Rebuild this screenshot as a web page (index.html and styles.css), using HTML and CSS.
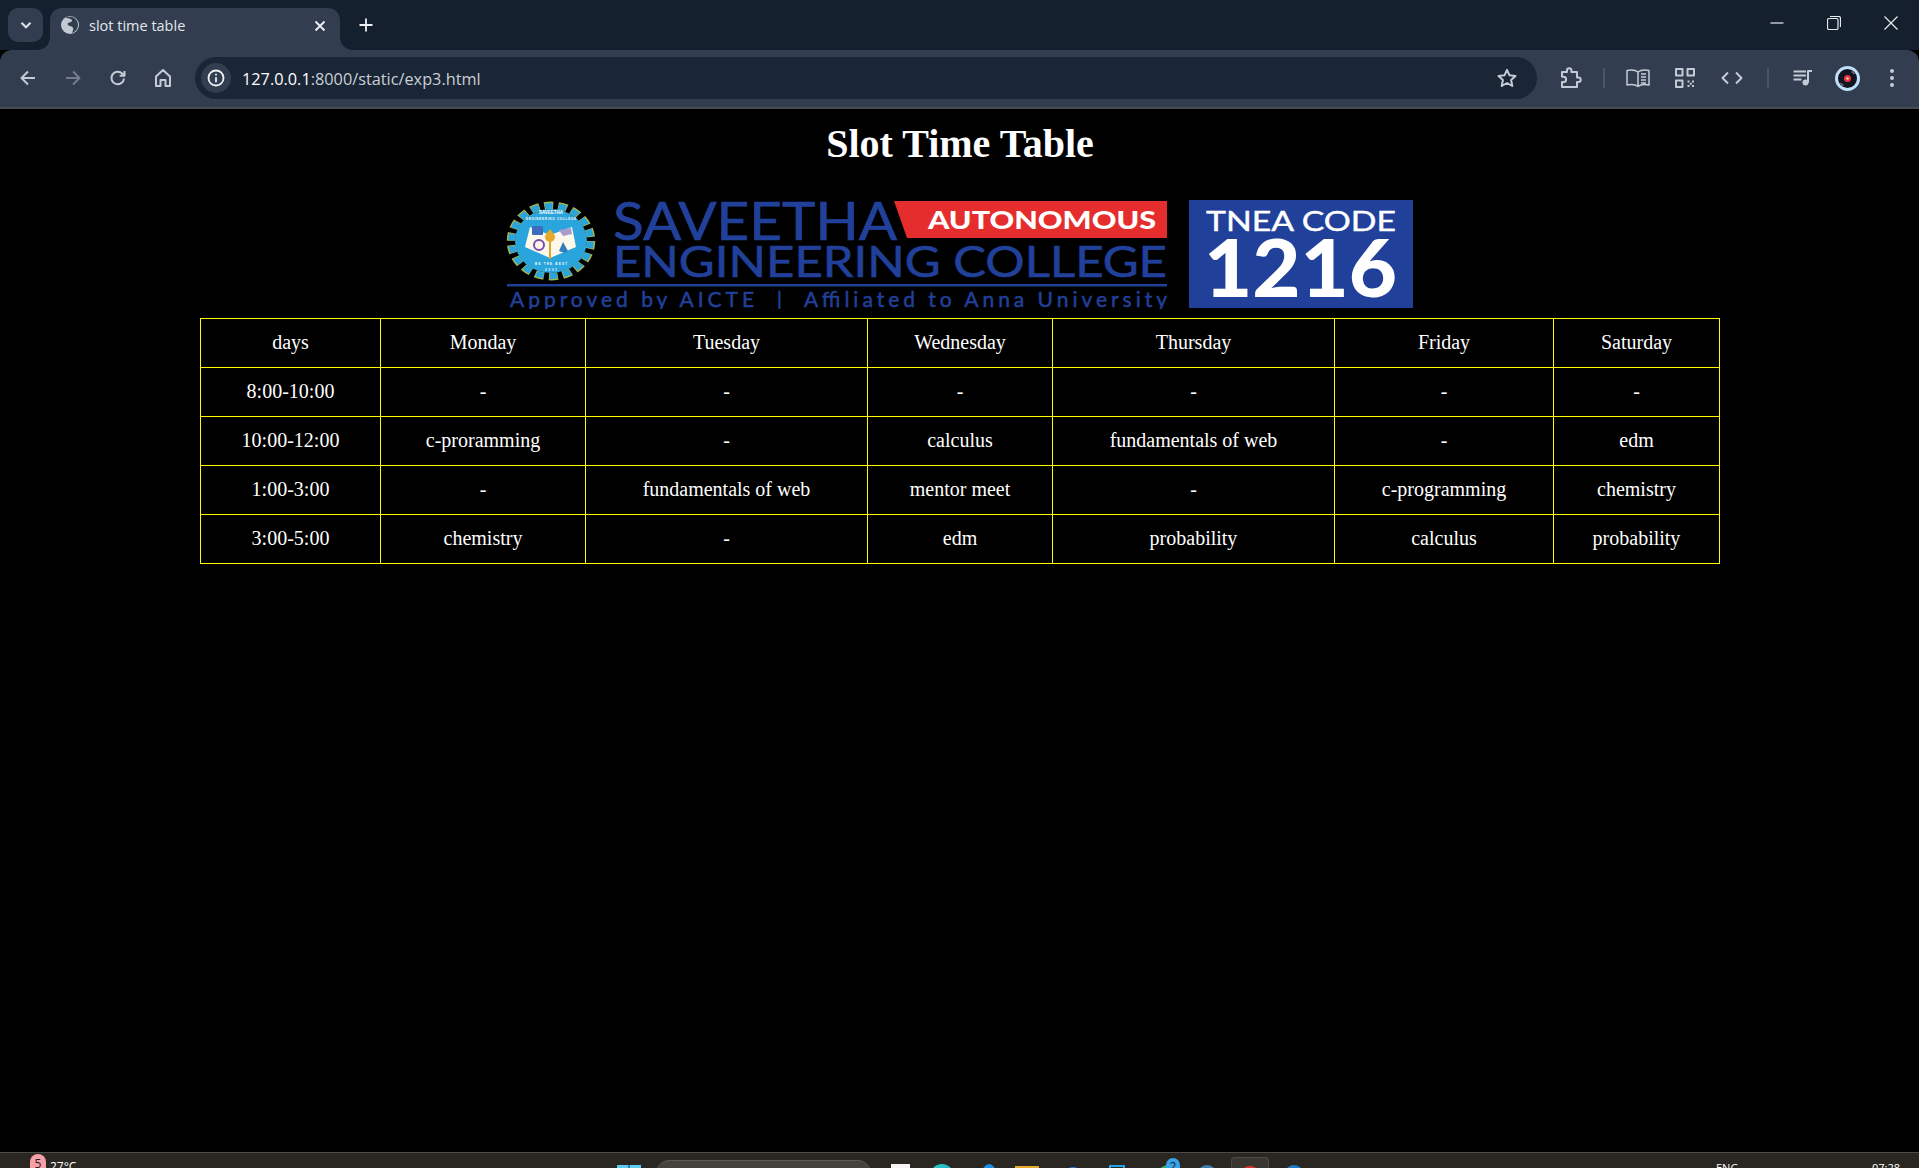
FILE: index.html
```html
<!DOCTYPE html>
<html lang="en">
<head>
<meta charset="utf-8">
<title>slot time table</title>
<link rel="stylesheet" href="styles.css">
</head>
<body>
<div class="app">
  <header class="chrome">
    <div class="tabstrip">
      <button class="tabsearch"><svg width="16" height="16" viewBox="0 0 16 16"><path d="M3.5 5.8 8 10.3l4.5-4.5" class="st2"/></svg></button>
      <div class="tab">
        <svg class="favicon" width="20" height="20" viewBox="0 0 20 20"><circle cx="10" cy="10" r="9" fill="#c3c9d1"/><path d="M6 1.800c1 2.200 3.500 1.400 5.500 2.700 1.500 1-.2 2.700-2 3-1.800.3-2.700 1.500-1.200 2.800 1.300 1.200 3.800.8 4.700 2.400.7 1.300-.3 3-1 5.300 3.500-1 6-4.200 6-7.900 0-4.500-3-7.300-6.500-8.300z" fill="#323e4f"/></svg>
        <span class="tabtitle">slot time table</span>
        <svg class="tabclose" width="12" height="12" viewBox="0 0 12 12"><path d="M1.500 1.500l9 9m0-9-9 9" class="st2 w"/></svg>
      </div>
      <div class="newtab"><svg width="16" height="16" viewBox="0 0 16 16"><path d="M8 1.500v13M1.500 8h13" class="st2 w"/></svg></div>
      <div class="winctrls">
        <div class="winbtn"><svg width="14" height="14" viewBox="0 0 14 14"><path d="M.5 7h13" class="st1"/></svg></div>
        <div class="winbtn"><svg width="14" height="14" viewBox="0 0 14 14"><rect x=".5" y="2.500" width="10.500" height="11" rx="1.500" class="st1"/><path d="M3 .5h8.500a2 2 0 0 1 2 2V11" class="st1"/></svg></div>
        <div class="winbtn"><svg width="14" height="14" viewBox="0 0 14 14"><path d="M.5.5l13 13m0-13-13 13" class="st1"/></svg></div>
      </div>
    </div>
    <div class="toolbar">
      <div class="navs">
        <div class="nav"><svg width="18" height="18" viewBox="0 0 18 18"><path d="M16 9H3M9 2.500 2.500 9 9 15.500" class="ic"/></svg></div>
        <div class="nav dim"><svg width="18" height="18" viewBox="0 0 18 18"><path d="M2 9h13M9 2.500 15.500 9 9 15.500" class="ic"/></svg></div>
        <div class="nav"><svg width="18" height="18" viewBox="0 0 18 18"><path d="M15 9.500A6.300 6.300 0 1 1 13.200 4.500L15.500 6.800M15.500 2v4.800h-4.800" class="ic"/></svg></div>
        <div class="nav"><svg width="18" height="20" viewBox="0 0 18 20"><path d="M2 8.500 9 2l7 6.500V18h-4.500v-6h-5v6H2z" class="ic"/></svg></div>
      </div>
      <div class="omnibox">
        <div class="siteinfo"><svg width="18" height="18" viewBox="0 0 18 18"><circle cx="9" cy="9" r="7.500" class="st2 w"/><path d="M9 8.200v5M9 4.800v1.700" class="st2 w"/></svg></div>
        <span class="url"><span class="host">127.0.0.1</span>:8000/static/exp3.html</span>
        <svg class="star" width="20" height="20" viewBox="0 0 20 20"><path d="M10 1.800l2.500 5.500 6 .7-4.400 4 1.200 6L10 15l-5.300 3 1.200-6-4.400-4 6-.7z" class="ic"/></svg>
      </div>
      <div class="tool first"><svg width="22" height="22" viewBox="0 0 22 22"><path d="M2 5h5V3.500a2.200 2.200 0 0 1 4.400 0V5H17v5.500h1.500a2.200 2.200 0 0 1 0 4.400H17V20H2v-5h1.500a2.600 2.600 0 0 0 0-5.200H2z" class="ic"/></svg></div>
      <div class="sep"></div>
      <div class="tool"><svg width="24" height="20" viewBox="0 0 24 20"><path d="M12 4C9.500 2 5 1.800 1 2.500V17c4-.7 8.500-.5 11 1.500 2.500-2 7-2.200 11-1.500V2.500C19 1.800 14.500 2 12 4zM12 4v14M15 6h5M15 9h5M15 12h5M15 15h5" class="ic thin"/></svg></div>
      <div class="tool"><svg width="20" height="20" viewBox="0 0 20 20"><path d="M1 1h6.500v6.500H1zM12.500 1H19v6.500h-6.500zM1 12.500h6.500V19H1z" class="ic"/><path d="M12.500 12.500h2v2h-2zM17 12.500h2v2h-2zM14.800 14.800h2v2h-2zM12.500 17h2v2h-2zM17 17h2v2h-2z" class="fillic"/></svg></div>
      <div class="tool"><svg width="22" height="14" viewBox="0 0 22 14"><path d="M7 1.500 1.500 7 7 12.500M15 1.500 20.500 7 15 12.500" class="ic"/></svg></div>
      <div class="sep wide"></div>
      <div class="tool small"><svg width="20" height="16" viewBox="0 0 20 16"><path d="M.5 1.500h12.500M.5 5.500h12.500M.5 9.500h8" class="ic"/><circle cx="12.500" cy="12.500" r="3" class="fillic"/><path d="M15 12.500V1h4" class="ic"/></svg></div>
      <div class="tool small"><div class="avatar"><svg width="25" height="25" viewBox="0 0 25 25"><circle cx="12.500" cy="12.500" r="11" fill="#121420" stroke="#bfe0fb" stroke-width="3"/><circle cx="12.500" cy="12.500" r="3.500" fill="#ee2f55"/><circle cx="12.500" cy="12.500" r="1.300" fill="#f6d34a"/><path d="M5.500 17a8 8 0 0 0 3 2.500M19.500 8a8 8 0 0 0-3-2.500" stroke="#656a78" stroke-width="1.500" fill="none"/></svg></div></div>
      <div class="tool small"><svg width="6" height="20" viewBox="0 0 6 20"><circle cx="3" cy="3" r="2" class="fillic"/><circle cx="3" cy="10" r="2" class="fillic"/><circle cx="3" cy="17" r="2" class="fillic"/></svg></div>
    </div>
  </header>

  <main class="page">
    <h1 class="title">Slot Time Table</h1>
    <div class="logorow">
      <svg class="logo" width="910" height="110" viewBox="0 0 910 110" role="img" aria-label="Saveetha Engineering College logo">
        <g transform="translate(46 42) scale(1 .89) translate(-46 -41)">
          <circle cx="46" cy="41" r="40" fill="none" stroke="#a8b54a" stroke-width="8.500" stroke-dasharray="9 4.960"/>
          <circle cx="46" cy="41" r="39.500" fill="none" stroke="#2aa4dc" stroke-width="6.500" stroke-dasharray="7.500 6.290" stroke-dashoffset="-.5"/>
          <circle cx="46" cy="41" r="36" fill="#2aa4dc"/>
        </g>
        <path d="M25 28 45 36v23L20 48zM45 36 67 28l4 20-26 11z" fill="#fdf8ea"/>
        <rect x="27" y="27" width="11" height="9" rx="1" fill="#3b6cc0"/>
        <circle cx="34" cy="46" r="5" fill="none" stroke="#7a4bb0" stroke-width="2"/>
        <path d="M54 31l12-2 1 6-9 2z" fill="#a99ad0"/>
        <path d="M54 52l4-9 5 9-3 2z" fill="#2c7ebc"/>
        <path d="M45 60V42" stroke="#e0a52c" stroke-width="2"/>
        <path d="M45 30c3 4 5 6 5 8a5 5 0 0 1-10 0c0-2 2-4 5-8z" fill="#e8a82a"/>
        <text x="46" y="15" class="seal seal-a" text-anchor="middle" textLength="24">SAVEETHA</text>
        <text x="46" y="21" class="seal seal-b" text-anchor="middle" textLength="50">ENGINEERING COLLEGE</text>
        <text x="46" y="66" class="seal seal-b" text-anchor="middle" textLength="32">BE THE BEST</text>
        <text x="46" y="72" class="seal seal-b" text-anchor="middle" textLength="12">2001</text>
        <text x="108" y="41" class="lg lg-a" textLength="284" lengthAdjust="spacingAndGlyphs">SAVEETHA</text>
        <polygon points="389,2 662,2 662,39 402,39" fill="#e52d2d"/>
        <text x="423" y="29.500" class="lg lg-auto" textLength="228" lengthAdjust="spacingAndGlyphs">AUTONOMOUS</text>
        <text x="108" y="78" class="lg lg-b" textLength="554" lengthAdjust="spacingAndGlyphs">ENGINEERING COLLEGE</text>
        <rect x="2" y="85" width="660" height="2.500" fill="#21409a"/>
        <text x="5" y="108" class="lg lg-c" textLength="657" lengthAdjust="spacing">Approved by AICTE  |  Affiliated to Anna University</text>
        <rect x="684" y="1" width="224" height="108" fill="#21409a"/>
        <text x="701" y="32" class="lg lg-tnea" textLength="190" lengthAdjust="spacingAndGlyphs">TNEA CODE</text>
        <text x="699" y="98" class="lg lg-code" textLength="193" lengthAdjust="spacingAndGlyphs">1216</text>
      </svg>
    </div>
    <table class="slots">
      <colgroup>
        <col class="c1"><col class="c2"><col class="c3"><col class="c4"><col class="c5"><col class="c6"><col class="c7">
      </colgroup>
      <tr><td>days</td><td>Monday</td><td>Tuesday</td><td>Wednesday</td><td>Thursday</td><td>Friday</td><td>Saturday</td></tr>
      <tr><td>8:00-10:00</td><td>-</td><td>-</td><td>-</td><td>-</td><td>-</td><td>-</td></tr>
      <tr><td>10:00-12:00</td><td>c-proramming</td><td>-</td><td>calculus</td><td>fundamentals of web</td><td>-</td><td>edm</td></tr>
      <tr><td>1:00-3:00</td><td>-</td><td>fundamentals of web</td><td>mentor meet</td><td>-</td><td>c-programming</td><td>chemistry</td></tr>
      <tr><td>3:00-5:00</td><td>chemistry</td><td>-</td><td>edm</td><td>probability</td><td>calculus</td><td>probability</td></tr>
    </table>
  </main>

  <footer class="taskbar">
    <div class="weather"><span class="badge">5</span><span class="temp">27°C</span></div>
    <div class="winlogo"><svg width="24" height="24" viewBox="0 0 24 24"><path d="M0 0h11.500v11.500H0zM12.500 0H24v11.500H12.500z" fill="#5ccdf2"/></svg></div>
    <div class="search"></div>
    <div class="tb white"></div>
    <div class="tb teal"></div>
    <div class="tb drop"></div>
    <div class="tb folder"></div>
    <div class="tb blue"></div>
    <div class="tb store"></div>
    <div class="tb notify"><span class="nbadge">2</span></div>
    <div class="tb globe"></div>
    <div class="tb active"><span class="red"></span></div>
    <div class="tb blue2"></div>
    <div class="tray"><span>ENG</span><span class="clock">07:28</span></div>
  </footer>
</div>
</body>
</html>
```

FILE: styles.css
```css
* { box-sizing: border-box; }
html, body { margin: 0; padding: 0; background: #000; }
.app { height: 100vh; display: flex; flex-direction: column; overflow: hidden; }

/* browser chrome */
.chrome { flex: none; font-family: "Open Sans", "Noto Sans", sans-serif; }
.tabstrip { height: 50px; background: #15202e; display: flex; align-items: flex-start; padding: 8px 0 0 8px; }
.tabsearch { width: 35px; height: 34px; border: 0; padding: 0; border-radius: 10px; background: #323e4f; display: flex; align-items: center; justify-content: center; }
.tab { position: relative; width: 290px; height: 42px; margin-left: 7px; background: #323e4f; border-radius: 12px 12px 0 0; display: flex; align-items: center; padding: 0 14px 0 10px; }
.tab::before, .tab::after { content: ""; position: absolute; bottom: 0; width: 12px; height: 12px; }
.tab::before { left: -12px; background: radial-gradient(circle at 0 0, transparent 11.5px, #323e4f 12px); }
.tab::after { right: -12px; background: radial-gradient(circle at 100% 0, transparent 11.5px, #323e4f 12px); }
.favicon { flex: none; margin-top: -8px; }
.tabtitle { margin-left: 9px; flex: 1; font-size: 14.500px; color: #e2e6eb; margin-top: -7px; }
.tabclose { flex: none; margin-top: -7px; }
.newtab { width: 16px; height: 16px; margin: 9px 0 0 18px; display: flex; }
.winctrls { margin-left: auto; display: flex; margin-top: 8px; padding-right: 21px; }
.winbtn { width: 57px; height: 16px; display: flex; justify-content: flex-end; }
.toolbar { height: 59px; background: #323e4f; border-radius: 12px 12px 0 0; border-bottom: 2px solid #474c52; display: flex; align-items: center; padding-bottom: 1px; }
.navs { display: flex; padding-left: 5px; }
.nav { width: 45px; height: 30px; display: flex; align-items: center; justify-content: center; }
.dim { opacity: .45; }
.omnibox { width: 1342px; height: 42px; margin-left: 10px; border-radius: 21px; background: #1a2535; display: flex; align-items: center; padding: 0 20px 0 6px; }
.siteinfo { width: 30px; height: 30px; border-radius: 50%; background: #323e4f; display: flex; align-items: center; justify-content: center; flex: none; }
.url { margin: 2px 0 0 11px; flex: 1; font-size: 16.300px; color: #c9cfd7; }
.host { color: #fff; }
.star { flex: none; }
.tool { width: 46px; height: 30px; margin-right: 1px; display: flex; align-items: center; justify-content: center; flex: none; }
.tool.first { margin: 0 0 0 11px; }
.tool.small { width: 44px; margin-right: 0.500px; }
.sep { width: 2px; height: 20px; margin: 0 10px 0 9px; background: #4b5665; flex: none; }
.sep.wide { margin: 0 12px 0 11px; }
.avatar { width: 25px; height: 25px; }
.st1 { fill: none; stroke: #e8eaee; stroke-width: 1.200; }
.st2 { fill: none; stroke: #d9dee5; stroke-width: 2.200; }
.st2.w { stroke: #eef0f3; stroke-width: 1.800; }
.ic { fill: none; stroke: #c3cbd6; stroke-width: 2; stroke-linejoin: round; }
.ic.thin { stroke-width: 1.500; }
.fillic { fill: #c3cbd6; }

/* page */
.page { flex: 1; min-height: 0; overflow: hidden; padding-left: 1px; background: #000; color: #fff; font-family: "Liberation Serif", "Times New Roman", serif; }
.title { margin: 12px 0 0; font-size: 40px; line-height: 46px; font-weight: 700; text-align: center; }
.logorow { display: flex; justify-content: center; margin-top: 32px; }
.logo { display: block; }
.lg { font-family: Lato, "Open Sans", sans-serif; fill: #21409a; }
.lg-a { font-size: 53px; font-weight: 400; stroke: #21409a; stroke-width: .7px; }
.lg-b { font-size: 43px; font-weight: 400; stroke: #21409a; stroke-width: .6px; }
.lg-c { font-size: 21px; font-weight: 400; white-space: pre; stroke: #21409a; stroke-width: .5px; }
.lg-auto { font-size: 25px; font-weight: 900; fill: #fff; }
.lg-tnea { font-size: 27px; font-weight: 400; fill: #fff; stroke: #fff; stroke-width: .4px; }
.lg-code { font-size: 80px; font-weight: 900; fill: #fff; }
.seal { font-family: "Liberation Sans", sans-serif; fill: #fff; font-weight: 700; }
.seal-a { font-size: 4.500px; }
.seal-b { font-size: 3px; }
.slots { width: 1519px; margin: 9px 0 0 199px; border-collapse: collapse; table-layout: fixed; font-size: 20px; }
.slots td { height: 49px; padding: 0 0 2px; text-align: center; border: 1px solid #ff0; }
.c1 { width: 180px; }
.c2 { width: 205px; }
.c3 { width: 282px; }
.c4 { width: 185px; }
.c5 { width: 282px; }
.c6 { width: 219px; }
.c7 { width: 166px; }

/* taskbar */
.taskbar { flex: none; height: 16px; background: #2a2723; border-top: 1px solid #4d4c48; display: flex; align-items: flex-start; overflow: hidden; color: #fff; font-family: "Open Sans", sans-serif; font-size: 12px; line-height: 16px; }
.weather { display: flex; margin-left: 30px; padding-top: 0; width: 587px; }
.badge { width: 16px; height: 24px; margin-top: 1px; border-radius: 8px; background: #f7a0a8; color: #222; text-align: center; font-size: 12px; line-height: 20px; }
.temp { margin: 6px 0 0 4px; }
.winlogo { margin-top: 12px; width: 38px; flex: none; }
.search { width: 217px; height: 30px; margin-top: 7px; border-radius: 15px; background: #45423e; border-top: 1px solid #5b5956; flex: none; }
.tb { flex: none; }
.white { width: 19px; height: 19px; margin: 11px 0 0 19px; background: #f4f4f4; }
.teal { width: 24px; height: 24px; margin: 11px 0 0 20px; border-radius: 50%; background: linear-gradient(135deg, #2dd4bf, #1c8fd0); }
.drop { width: 14px; height: 20px; margin: 11px 0 0 28px; border-radius: 50% 50% 40% 40%; background: #1b8fe6; }
.folder { width: 24px; height: 14px; margin: 13px 0 0 19px; background: #e5a92f; }
.blue { width: 16px; height: 16px; margin: 14px 0 0 26px; border-radius: 50%; background: #1f7ee6; }
.store { width: 16px; height: 18px; margin: 12px 0 0 28px; border: 2px solid #23a4e6; }
.notify { position: relative; width: 20px; height: 18px; margin: 12px 0 0 33px; border-radius: 50%; background: #2cb56c; }
.nbadge { position: absolute; left: 8px; top: -7px; width: 14px; height: 26px; border-radius: 7px; background: #3aa3e8; color: #152330; font-size: 12px; line-height: 18px; text-align: center; }
.globe { width: 20px; height: 20px; margin: 12px 0 0 19px; border-radius: 50%; background: #3f7fae; }
.active { width: 38px; height: 20px; margin: 4px 0 0 14px; border: 1px solid #4c4a47; border-bottom: 0; border-radius: 4px 4px 0 0; background: #3a3733; display: flex; justify-content: center; }
.red { width: 20px; height: 20px; margin-top: 8px; border-radius: 50%; background: #e2362f; }
.blue2 { width: 20px; height: 20px; margin: 12px 0 0 15px; border-radius: 50%; background: #1e79c7; }
.tray { flex: 1; display: flex; padding: 7px 19px 0 412px; justify-content: space-between; font-size: 11px; }
```
